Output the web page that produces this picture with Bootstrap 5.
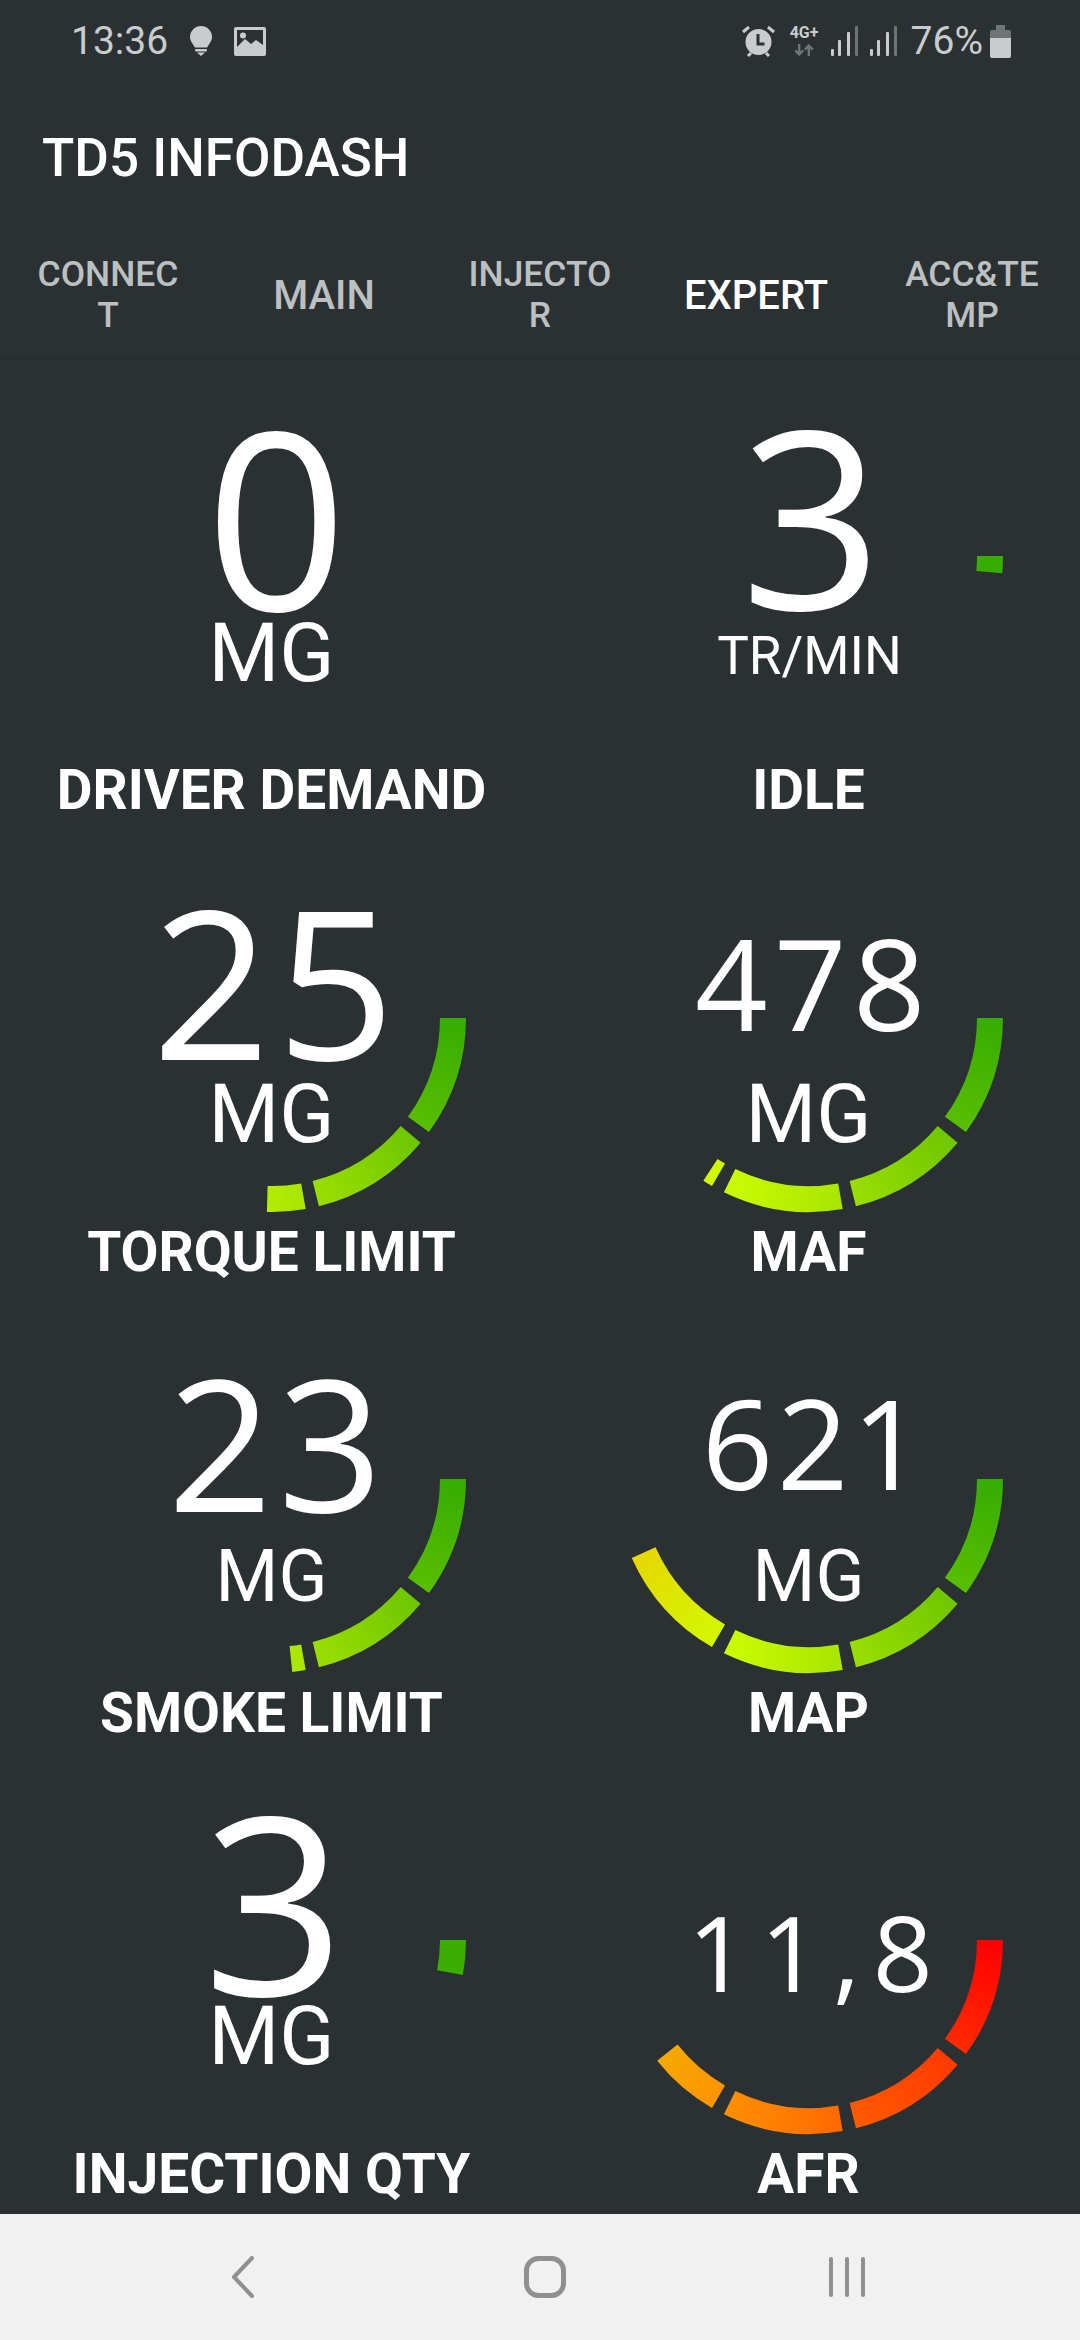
<!DOCTYPE html>
<html lang="fr">
<head>
<meta charset="utf-8">
<title>TD5 INFODASH</title>
<link href="https://cdn.jsdelivr.net/npm/bootstrap@5.3.0/dist/css/bootstrap.min.css" rel="stylesheet">
<style>
html,body{height:100%;}
body{background:#2b3133;color:#fff;font-family:Roboto,"Liberation Sans",sans-serif;overflow:hidden;}
.phone{width:1080px;height:2340px;}
.status-bar{height:82px;padding:0 69px 0 71px;color:#c9cccc;font-size:39px;line-height:1;}
.ic-gap{margin-left:22px;}
.pct-gap{margin-left:14px;}
.net-ic{width:31px;height:30px;margin:0 11px 0 14px;}
.net-txt{font-size:16px;line-height:14px;font-weight:700;}
.sig{margin-right:12px;}
.batt{margin-left:7px;}
.title-bar{height:152px;padding-left:42px;font-size:53px;line-height:1;font-weight:500;}
.tab-strip{height:122px;box-shadow:0 3px 4px rgba(0,0,0,.05);}
.tab-strip .nav-link{padding:0;color:#bcc0c0;font-weight:500;font-size:35.4px;line-height:41px;}
.tab-strip .nav-link.solo{font-size:40px;}
.tab-strip .nav-link.active{color:#fff;}
.dash{padding:0 3px;flex:1 1 auto;min-height:0;}
.cell{height:461.3px;position:relative;text-align:center;}
.val{font-family:"Open Sans","Noto Sans",sans-serif;white-space:nowrap;}
.unit{font-size:81px;line-height:1;font-weight:400;}
.unit-sm{font-size:72px;}
.unit-xs{font-size:53px;padding-left:2px;}
.lbl{margin-top:auto;margin-bottom:2px;font-size:55px;line-height:50px;font-weight:700;}
.arc{position:absolute;top:200.3px;left:calc(50% - 200px);width:400px;height:210px;}
.arc path{fill:none;stroke-width:26;}
.v-a{padding-top:61px;}.v-a .val{font-size:248px;line-height:196px;padding-left:10px;}
.v-b{padding-top:43px;}.v-b .val{font-size:248px;line-height:231px;padding-left:6px;}
.v-c{padding-top:69px;}.v-c .val{font-size:207px;line-height:188px;letter-spacing:.03em;padding-left:10px;}
.v-d{padding-top:72px;}.v-d .val{font-size:127px;line-height:185px;letter-spacing:.05em;padding-left:10px;}
.v-e{padding-top:63px;}.v-e .val{font-size:183px;line-height:199px;letter-spacing:.03em;padding-left:13px;}
.v-f{padding-top:64px;}.v-f .val{font-size:125px;line-height:198px;letter-spacing:.03em;padding-left:12px;}
.v-g{padding-top:64px;}.v-g .val{font-size:248px;line-height:192px;padding-left:5px;}
.v-h{padding-top:152px;}.v-h .val{font-size:105px;line-height:120px;letter-spacing:.12em;padding-left:16px;}
.sys-nav{height:126px;background:#f1f1f1;padding-left:9px;}
.sys-nav>div{width:302px;}
</style>
</head>
<body>
<div class="phone d-flex flex-column">
  <div class="status-bar d-flex align-items-center justify-content-between flex-shrink-0">
    <div class="d-flex align-items-center">
      <span>13:36</span>
      <svg class="ic-gap" width="22" height="30" viewBox="0 0 22 30" fill="#c9cccc"><path d="M11 0a11 11 0 0 1 11 11c0 4-2.500 6-4 9-.4.8-.6 1-1 1.500H5c-.4-.5-.6-.7-1-1.500C2.500 17 0 15 0 11A11 11 0 0 1 11 0z"/><rect x="5" y="23" width="12" height="2.500" rx="1"/><path d="M7 26.500h8L11 30z"/></svg>
      <svg class="ic-gap" width="32" height="29" viewBox="0 0 32 29"><rect width="32" height="29" rx="2" fill="#c9cccc"/><rect x="3" y="3" width="26" height="20" fill="#2b3133"/><path d="M3 20l8-8 6 5 5-4 7 5v6H3z" fill="#c9cccc"/><circle cx="9" cy="8.500" r="3" fill="#c9cccc"/></svg>
    </div>
    <div class="d-flex align-items-center">
      <svg width="33" height="31" viewBox="0 0 33 31"><circle cx="16.500" cy="16" r="13" fill="#c9cccc"/><path d="M1 6l6-5M32 6l-6-5M6 30l3-3M27 30l-3-3" stroke="#c9cccc" stroke-width="3" fill="none"/><path d="M16 8v10h6.500" stroke="#2b3133" stroke-width="3" fill="none"/></svg>
      <div class="net-ic d-flex flex-column align-items-center">
        <span class="net-txt">4G+</span>
        <svg class="mt-1" width="24" height="15" viewBox="0 0 24 15" fill="none" stroke="#6f7577" stroke-width="3"><path d="M6 0v13M1 8l5 5 5-5M18 15V2M13 7l5-5 5 5"/></svg>
      </div>
      <svg class="sig" width="27" height="30" viewBox="0 0 27 30" fill="#c9cccc"><rect x="0" y="23" width="3" height="7" rx="1"/><rect x="7" y="14" width="3" height="16" rx="1"/><rect x="16" y="6" width="3" height="24" rx="1"/><rect x="24" y="0" width="3" height="30" rx="1" fill="#6f7577"/></svg>
      <svg width="27" height="30" viewBox="0 0 27 30" fill="#c9cccc"><rect x="0" y="23" width="3" height="7" rx="1"/><rect x="7" y="14" width="3" height="16" rx="1"/><rect x="16" y="6" width="3" height="24" rx="1"/><rect x="24" y="0" width="3" height="30" rx="1" fill="#6f7577"/></svg>
      <span class="pct-gap">76%</span>
      <svg class="batt" width="21" height="33" viewBox="0 0 21 33"><path d="M6 0h9v5h4a2 2 0 0 1 2 2v6H0V7a2 2 0 0 1 2-2h4z" fill="#6f7577"/><path d="M0 13h21v18a2 2 0 0 1-2 2H2a2 2 0 0 1-2-2z" fill="#c9cccc"/></svg>
    </div>
  </div>

  <div class="title-bar d-flex align-items-center flex-shrink-0">TD5 INFODASH</div>

  <ul class="nav nav-justified tab-strip flex-shrink-0 align-items-center">
    <li class="nav-item"><a class="nav-link" href="#">CONNEC<br>T</a></li>
    <li class="nav-item"><a class="nav-link solo" href="#">MAIN</a></li>
    <li class="nav-item"><a class="nav-link" href="#">INJECTO<br>R</a></li>
    <li class="nav-item"><a class="nav-link solo active" href="#">EXPERT</a></li>
    <li class="nav-item"><a class="nav-link" href="#">ACC&amp;TE<br>MP</a></li>
  </ul>

  <div class="dash">
    <div class="row g-0">
      <div class="col-6"><div class="cell v-a d-flex flex-column">
        <div class="val">0</div><div class="unit">MG</div><div class="lbl">DRIVER DEMAND</div>
      </div></div>
      <div class="col-6"><div class="cell v-b d-flex flex-column">
        <div class="val">3</div><div class="unit unit-xs">TR/MIN</div><div class="lbl">IDLE</div>
        <svg class="arc" viewBox="-200 0 400 210">
          <defs>
            <linearGradient id="g1" gradientUnits="userSpaceOnUse" x1="181" y1="0" x2="146" y2="106"><stop offset="0" stop-color="#36ad00"/><stop offset="1" stop-color="#58be00"/></linearGradient>
            <linearGradient id="g2" gradientUnits="userSpaceOnUse" x1="139" y1="116" x2="44" y2="176"><stop offset="0" stop-color="#6ec700"/><stop offset="1" stop-color="#9ade00"/></linearGradient>
            <linearGradient id="g3" gradientUnits="userSpaceOnUse" x1="31" y1="178" x2="-79" y2="163"><stop offset="0" stop-color="#a8e600"/><stop offset="1" stop-color="#cbfb00"/></linearGradient>
            <linearGradient id="g4" gradientUnits="userSpaceOnUse" x1="-90" y1="157" x2="-165" y2="74"><stop offset="0" stop-color="#d2f800"/><stop offset="1" stop-color="#e6d800"/></linearGradient>
            <linearGradient id="r1" gradientUnits="userSpaceOnUse" x1="181" y1="0" x2="146" y2="106"><stop offset="0" stop-color="#ff0000"/><stop offset="1" stop-color="#ff2a00"/></linearGradient>
            <linearGradient id="r2" gradientUnits="userSpaceOnUse" x1="139" y1="116" x2="44" y2="176"><stop offset="0" stop-color="#ff3a00"/><stop offset="1" stop-color="#ff5a00"/></linearGradient>
            <linearGradient id="r3" gradientUnits="userSpaceOnUse" x1="31" y1="178" x2="-79" y2="163"><stop offset="0" stop-color="#ff6a00"/><stop offset="1" stop-color="#ff8f00"/></linearGradient>
            <linearGradient id="r4" gradientUnits="userSpaceOnUse" x1="-90" y1="157" x2="-142" y2="113"><stop offset="0" stop-color="#ff9400"/><stop offset="1" stop-color="#f5a800"/></linearGradient>
          </defs>
          <path stroke="#36ad00" d="M181 0A181 181 0 0 1 180.280 16.090"/>
        </svg>
      </div></div>

      <div class="col-6"><div class="cell v-c d-flex flex-column">
        <div class="val">25</div><div class="unit">MG</div><div class="lbl">TORQUE LIMIT</div>
        <svg class="arc" viewBox="-200 0 400 210">
          <path stroke="url(#g1)" d="M181 0A181 181 0 0 1 146.430 106.390"/>
          <path stroke="url(#g2)" d="M138.650 116.340A181 181 0 0 1 43.790 175.620"/>
          <path stroke="url(#g3)" d="M31.430 178.250A181 181 0 0 1 -4.740 180.940"/>
        </svg>
      </div></div>
      <div class="col-6"><div class="cell v-d d-flex flex-column">
        <div class="val">478</div><div class="unit">MG</div><div class="lbl">MAF</div>
        <svg class="arc" viewBox="-200 0 400 210">
          <path stroke="url(#g1)" d="M181 0A181 181 0 0 1 146.430 106.390"/>
          <path stroke="url(#g2)" d="M138.650 116.340A181 181 0 0 1 43.790 175.620"/>
          <path stroke="url(#g3)" d="M31.430 178.250A181 181 0 0 1 -79.350 162.680"/>
          <path stroke="#d2f800" d="M-90.500 156.750A181 181 0 0 1 -98.580 151.800"/>
        </svg>
      </div></div>

      <div class="col-6"><div class="cell v-e d-flex flex-column">
        <div class="val">23</div><div class="unit unit-sm">MG</div><div class="lbl">SMOKE LIMIT</div>
        <svg class="arc" viewBox="-200 0 400 210">
          <path stroke="url(#g1)" d="M181 0A181 181 0 0 1 146.430 106.390"/>
          <path stroke="url(#g2)" d="M138.650 116.340A181 181 0 0 1 43.790 175.620"/>
          <path stroke="url(#g3)" d="M31.430 178.250A181 181 0 0 1 18.920 180.010"/>
        </svg>
      </div></div>
      <div class="col-6"><div class="cell v-f d-flex flex-column">
        <div class="val">621</div><div class="unit unit-sm">MG</div><div class="lbl">MAP</div>
        <svg class="arc" viewBox="-200 0 400 210">
          <path stroke="url(#g1)" d="M181 0A181 181 0 0 1 146.430 106.390"/>
          <path stroke="url(#g2)" d="M138.650 116.340A181 181 0 0 1 43.790 175.620"/>
          <path stroke="url(#g3)" d="M31.430 178.250A181 181 0 0 1 -79.350 162.680"/>
          <path stroke="url(#g4)" d="M-90.500 156.750A181 181 0 0 1 -165.350 73.620"/>
        </svg>
      </div></div>

      <div class="col-6"><div class="cell v-g d-flex flex-column">
        <div class="val">3</div><div class="unit">MG</div><div class="lbl">INJECTION QTY</div>
        <svg class="arc" viewBox="-200 0 400 210">
          <path stroke="#3aaf00" d="M181 0A181 181 0 0 1 178.030 32.670"/>
        </svg>
      </div></div>
      <div class="col-6"><div class="cell v-h d-flex flex-column">
        <div class="val">11,8</div><div class="lbl">AFR</div>
        <svg class="arc" viewBox="-200 0 400 210">
          <path stroke="url(#r1)" d="M181 0A181 181 0 0 1 146.430 106.390"/>
          <path stroke="url(#r2)" d="M138.650 116.340A181 181 0 0 1 43.790 175.620"/>
          <path stroke="url(#r3)" d="M31.430 178.250A181 181 0 0 1 -79.350 162.680"/>
          <path stroke="url(#r4)" d="M-90.500 156.750A181 181 0 0 1 -141.650 112.670"/>
        </svg>
      </div></div>
    </div>
  </div>

  <div class="sys-nav d-flex justify-content-center align-items-center flex-shrink-0">
    <div class="d-flex justify-content-center"><svg width="24" height="42" viewBox="0 0 24 42" fill="none" stroke="#8f9090" stroke-width="4" stroke-linecap="round" stroke-linejoin="round"><path d="M21 2L3 21l18 19"/></svg></div>
    <div class="d-flex justify-content-center"><svg width="42" height="42" viewBox="0 0 42 42" fill="none" stroke="#8f9090" stroke-width="5"><rect x="2.500" y="2.500" width="37" height="37" rx="12"/></svg></div>
    <div class="d-flex justify-content-center"><svg width="36" height="40" viewBox="0 0 36 40" fill="none" stroke="#8f9090" stroke-width="4" stroke-linecap="round"><path d="M2 2v36M18 2v36M34 2v36"/></svg></div>
  </div>
</div>
<script src="https://cdn.jsdelivr.net/npm/bootstrap@5.3.0/dist/js/bootstrap.bundle.min.js"></script>
</body>
</html>
